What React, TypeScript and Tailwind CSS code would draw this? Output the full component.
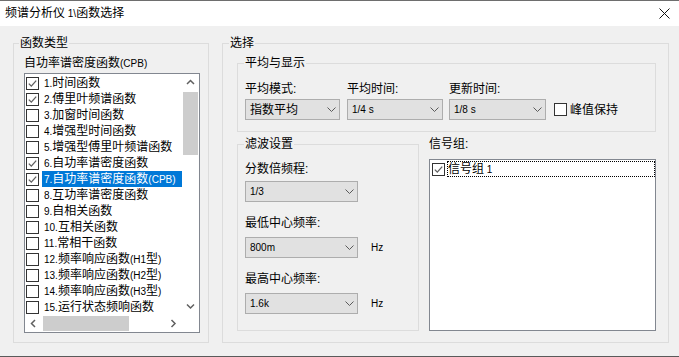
import React from "react";

// 列表项
const FUNCS: { label: string; checked: boolean }[] = [
  { label: "1.时间函数", checked: true },
  { label: "2.傅里叶频谱函数", checked: true },
  { label: "3.加窗时间函数", checked: false },
  { label: "4.增强型时间函数", checked: false },
  { label: "5.增强型傅里叶频谱函数", checked: false },
  { label: "6.自功率谱密度函数", checked: true },
  { label: "7.自功率谱密度函数(CPB)", checked: true },
  { label: "8.互功率谱密度函数", checked: false },
  { label: "9.自相关函数", checked: false },
  { label: "10.互相关函数", checked: false },
  { label: "11.常相干函数", checked: false },
  { label: "12.频率响应函数(H1型)", checked: false },
  { label: "13.频率响应函数(H2型)", checked: false },
  { label: "14.频率响应函数(H3型)", checked: false },
  { label: "15.运行状态频响函数", checked: false },
];

const SELECTED = 6;

// 西文字符比中文略小
const T: React.FC<{ s: string }> = ({ s }) => (
  <>
    {s.split(/([\x20-\x7e]+)/).map((part, i) =>
      /^[\x20-\x7e]+$/.test(part) ? (
        <span key={i} className="text-[10px]">
          {part}
        </span>
      ) : (
        part
      )
    )}
  </>
);

const CheckBox: React.FC<{ checked?: boolean }> = ({ checked = false }) => (
  <span className="w-[13px] h-[13px] shrink-0 border border-[#333333] bg-white flex items-center justify-center">
    {checked && (
      <svg width="11" height="11" viewBox="0 0 11 11">
        <path d="M1.8 5.6 L4.3 8.1 L9.2 2.6" stroke="#5f5f5f" strokeWidth="1.3" fill="none" />
      </svg>
    )}
  </span>
);

const Chevron: React.FC<{ dir: "up" | "down" | "left" | "right" }> = ({ dir }) => {
  const d = {
    up: "M1 5 L4.5 1.5 L8 5",
    down: "M1 1.5 L4.5 5 L8 1.5",
    left: "M5 1 L1.5 4.5 L5 8",
    right: "M1.5 1 L5 4.5 L1.5 8",
  }[dir];
  const horiz = dir === "up" || dir === "down";
  return (
    <svg width={horiz ? 9 : 7} height={horiz ? 7 : 9} viewBox={horiz ? "0 0 9 7" : "0 0 7 9"}>
      <path d={d} stroke="#606060" strokeWidth="1.5" fill="none" />
    </svg>
  );
};

const Combo: React.FC<{ value: string; className: string }> = ({ value, className }) => (
  <div
    className={`${className} h-[21px] border border-[#adadad] bg-[#e1e1e1] flex items-center justify-between pl-[4px] pr-[3px]`}
  >
    <span className="leading-[14px]">
      <T s={value} />
    </span>
    <svg width="9" height="5" viewBox="0 0 9 5">
      <path d="M0.5 0.5 L4.5 4.5 L8.5 0.5" stroke="#5a5a5a" strokeWidth="1" fill="none" />
    </svg>
  </div>
);

// 分组框
const GroupBox: React.FC<{
  title: string;
  className: string;
  labelClass?: string;
  children?: React.ReactNode;
}> = ({ title, className, labelClass = "ml-[6px]", children }) => (
  <div className={`border border-[#dcdcdc] ${className}`}>
    <div className={`-mt-[8px] w-fit px-[1px] bg-[#f0f0f0] leading-[14px] ${labelClass}`}>{title}</div>
    {children}
  </div>
);

const FuncList: React.FC = () => (
  <div className="ml-[10px] mt-[2px] w-[176px] h-[260px] border border-[#828790] bg-white flex flex-col">
    <div className="flex h-[241px]">
      <div className="flex-1 overflow-hidden pt-[1px]">
        {FUNCS.map((f, i) => (
          <div key={f.label} className="h-[16px] flex items-center pl-[1px] whitespace-nowrap">
            <CheckBox checked={f.checked} />
            <span
              className={
                i === SELECTED
                  ? "ml-[3px] pl-[2px] flex-1 h-[16px] leading-[16px] bg-[#0078d7] text-white"
                  : "ml-[3px] pl-[2px] leading-[16px]"
              }
            >
              <T s={f.label} />
            </span>
          </div>
        ))}
      </div>
      <div className="w-[17px] flex flex-col">
        <div className="h-[17px] flex items-center justify-center">
          <Chevron dir="up" />
        </div>
        <div className="flex-1">
          <div className="mt-[1px] mx-[1px] h-[63px] bg-[#cdcdcd]" />
        </div>
        <div className="h-[17px] flex items-center justify-center">
          <Chevron dir="down" />
        </div>
      </div>
    </div>
    <div className="flex h-[17px]">
      <div className="w-[17px] flex items-center justify-center">
        <Chevron dir="left" />
      </div>
      <div className="flex-1 py-[1px]">
        <div className="ml-[1px] w-[86px] h-full bg-[#cdcdcd]" />
      </div>
      <div className="w-[17px] flex items-center justify-center">
        <Chevron dir="right" />
      </div>
      <div className="w-[17px]" />
    </div>
  </div>
);

export default function App() {
  return (
    <div className="w-[679px] h-[357px] flex flex-col bg-[#f0f0f0] border-t border-b border-t-[#6e6e6e] border-b-[#5a5a5a] text-[12px] text-black font-['Liberation_Sans','Noto_Sans_CJK_SC',sans-serif]">
      {/* 标题栏 */}
      <div className="h-[25px] bg-white flex items-center justify-between pl-[5px] pr-[9px]">
        <span className="leading-[14px]">
          <T s="频谱分析仪 1\函数选择" />
        </span>
        <svg width="11" height="11" viewBox="0 0 11 11">
          <path d="M0.5 0.5 L10.5 10.5 M10.5 0.5 L0.5 10.5" stroke="#111" strokeWidth="1" />
        </svg>
      </div>

      {/* 主体 */}
      <div className="flex-1 flex pt-[17px] pl-[13px]">
        <GroupBox title="函数类型" className="w-[196px] h-[300px]" labelClass="ml-[5px]">
          <div className="pl-[10px] mt-[6px] leading-[14px]">
            <T s="自功率谱密度函数(CPB)" />
          </div>
          <FuncList />
        </GroupBox>

        <GroupBox title="选择" className="ml-[13px] w-[447px] h-[300px]">
          <div className="ml-[14px] mr-[12px] mt-[13px]">
            <GroupBox title="平均与显示" className="h-[69px]">
              <div className="pl-[7px] mt-[12px] flex">
                <div className="w-[95px]">
                  <div className="leading-[14px]">平均模式:</div>
                  <Combo value="指数平均" className="mt-[3px] w-[95px]" />
                </div>
                <div className="ml-[7px] w-[96px]">
                  <div className="leading-[14px]">平均时间:</div>
                  <Combo value="1/4 s" className="mt-[3px] w-[96px]" />
                </div>
                <div className="ml-[6px] w-[97px]">
                  <div className="leading-[14px]">更新时间:</div>
                  <Combo value="1/8 s" className="mt-[3px] w-[97px]" />
                </div>
                <div className="ml-[8px] self-end h-[21px] flex items-center">
                  <CheckBox />
                  <span className="ml-[3px] leading-[14px]">峰值保持</span>
                </div>
              </div>
            </GroupBox>

            <div className="mt-[12px] flex">
              <GroupBox title="滤波设置" className="w-[182px] h-[187px]">
                <div className="pl-[7px]">
                  <div className="mt-[11px] leading-[14px]">分数倍频程:</div>
                  <Combo value="1/3" className="mt-[5px] w-[113px]" />
                  <div className="mt-[14px] leading-[14px]">最低中心频率:</div>
                  <div className="mt-[7px] flex items-center">
                    <Combo value="800m" className="w-[113px]" />
                    <span className="ml-[13px] leading-[14px] text-[10px]">Hz</span>
                  </div>
                  <div className="mt-[14px] leading-[14px]">最高中心频率:</div>
                  <div className="mt-[7px] flex items-center">
                    <Combo value="1.6k" className="w-[113px]" />
                    <span className="ml-[13px] leading-[14px] text-[10px]">Hz</span>
                  </div>
                </div>
              </GroupBox>

              <div className="ml-[10px] w-[227px] -mt-[7px]">
                <div className="leading-[14px]">信号组:</div>
                <div className="mt-[8px] h-[172px] border border-[#828790] bg-white">
                  <div className="mt-[1px] h-[16px] flex items-center pl-[2px]">
                    <CheckBox checked />
                    <span className="ml-[2px] flex-1 h-[16px] border border-dotted border-black leading-[14px] whitespace-nowrap">
                      <T s="信号组 1" />
                    </span>
                  </div>
                </div>
              </div>
            </div>
          </div>
        </GroupBox>
      </div>
    </div>
  );
}
